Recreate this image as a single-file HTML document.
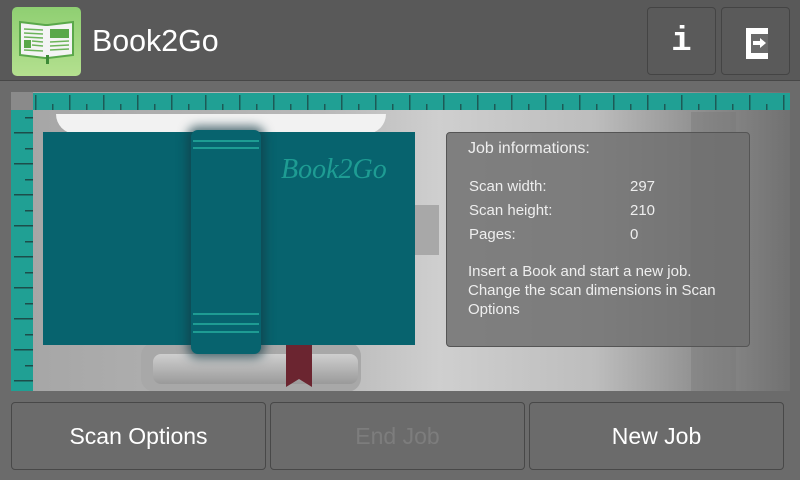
<!DOCTYPE html>
<html><head><style>
*{margin:0;padding:0;box-sizing:border-box}
body{width:800px;height:480px;background:#6b6b6b;font-family:"Liberation Sans",sans-serif;position:relative;overflow:hidden}
.hdr{position:absolute;left:0;top:0;width:800px;height:81px;background:#595959;border-bottom:1px solid #474747}
.logo{position:absolute;left:12px;top:7px;width:69px;height:69px;border-radius:5px;background:linear-gradient(#8fcf72,#b4e08f);}
.title{position:absolute;left:92px;top:23px;font-size:31px;color:#fff;transform:scaleX(.98);transform-origin:left}
.hb{position:absolute;top:7px;width:69px;height:68px;border:1px solid #444;border-radius:4px;background:#5a5a5a;color:#fff;text-align:center}
.scan{position:absolute;left:11px;top:92px;width:779px;height:299px;background:linear-gradient(90deg,#a5a5a5 0%,#b8b8b8 40%,#cfcfcf 55%,#bdbdbd 75%,#8a8a8a 90%,#717171 100%);overflow:hidden}
.btn{position:absolute;top:402px;width:255px;height:68px;border:1px solid #484848;border-radius:4px;background:#6b6b6b;color:#fff;font-size:23px;text-align:center;line-height:66px}
.info{position:absolute;left:446px;top:132px;width:304px;height:215px;border:1px solid #555;border-radius:4px;background:rgba(110,110,110,.82);color:#eee;font-size:15px}
</style></head><body>
<div class="hdr">
 <div class="logo">
  <svg width="69" height="69" viewBox="0 0 69 69">
   <path d="M8 15 L33 18 L36 18 L61 15 L61 48 L36 51 L33 51 L8 48Z" fill="#f4f4f4" stroke="#5aa84a" stroke-width="2"/>
   <g stroke="#6cb45a" stroke-width="1.5">
    <line x1="12" y1="22" x2="31" y2="23"/><line x1="12" y1="26" x2="31" y2="27"/><line x1="12" y1="30" x2="31" y2="31"/><line x1="20" y1="34" x2="31" y2="35"/><line x1="20" y1="38" x2="31" y2="39"/><line x1="12" y1="43" x2="31" y2="44"/>
    <line x1="38" y1="35" x2="57" y2="34"/><line x1="38" y1="39" x2="57" y2="38"/><line x1="38" y1="43" x2="57" y2="42"/>
   </g>
   <rect x="12" y="33" width="7" height="8" fill="#5aa84a"/><rect x="38" y="22" width="19" height="9" fill="#5aa84a"/>
   <rect x="34" y="48" width="3" height="9" fill="#3c8a36"/>
  </svg>
 </div>
 <div class="title">Book2Go</div>
 <div class="hb" style="left:647px;font-size:34px;font-weight:bold;line-height:68px;font-family:'Liberation Mono',monospace">i</div>
 <div class="hb" style="left:721px"><svg width="69" height="68"><path d="M24 20h22v6h-17v19h17v6h-22z" fill="#fff"/><path d="M29 26h17v19h-17z" fill="#6a6a6a"/><path d="M31 33h7v-3l6 5-6 5v-3h-7z" fill="#fff"/></svg></div>
</div>
<div class="scan">
 <div style="position:absolute;left:130px;top:250px;width:220px;height:50px;border-radius:14px;background:#a8a8a8"></div>
 <div style="position:absolute;left:142px;top:262px;width:205px;height:30px;border-radius:8px;background:linear-gradient(#cfcfcf,#9a9a9a)"></div>
 <div style="position:absolute;left:680px;top:20px;width:45px;height:280px;background:rgba(120,120,120,.4)"></div>
 <div style="position:absolute;left:403px;top:113px;width:25px;height:50px;background:#a8a8a8"></div>
 <div style="position:absolute;left:45px;top:22px;width:330px;height:20px;background:#f2f2f2;border-radius:0 0 20px 20px"></div>
 <div style="position:absolute;left:32px;top:40px;width:372px;height:213px;background:#07636e"></div>
 <div style="position:absolute;left:180px;top:38px;width:70px;height:224px;border-radius:7px;background:#07636e;box-shadow:0 0 10px 4px rgba(20,60,70,.7)">
  <div style="position:absolute;left:2px;top:10px;width:66px;height:2px;background:#1e9c93"></div>
  <div style="position:absolute;left:2px;top:17px;width:66px;height:2px;background:#1e9c93"></div>
  <div style="position:absolute;left:2px;top:183px;width:66px;height:2px;background:#1e9c93"></div>
  <div style="position:absolute;left:2px;top:193px;width:66px;height:2px;background:#1e9c93"></div>
  <div style="position:absolute;left:2px;top:201px;width:66px;height:2px;background:#1e9c93"></div>
 </div>
 <div style="position:absolute;left:270px;top:62px;color:#1e9c93;font-size:28px;font-style:italic;font-family:'Liberation Serif',serif">Book2Go</div>
 <svg style="position:absolute;left:275px;top:253px" width="26" height="42"><path d="M0 0h26v42l-13-8-13 8z" fill="#6b2530"/></svg>
 <div style="position:absolute;left:0;top:0;width:22px;height:18px;background:#8a8a8a"></div>
 <svg style="position:absolute;left:0;top:0" width="779" height="299">
  <defs>
   <pattern id="pt" x="22" y="0" width="34" height="18" patternUnits="userSpaceOnUse">
    <rect width="34" height="18" fill="#20a094"/>
    <rect x="2" y="3" width="1.5" height="15" fill="#1d5a56"/>
    <rect x="19" y="12" width="1.5" height="6" fill="#1d5a56"/>
   </pattern>
   <pattern id="pl" x="0" y="18" width="22" height="31" patternUnits="userSpaceOnUse">
    <rect width="22" height="31" fill="#20a094"/>
    <rect x="14" y="7" width="8" height="1.5" fill="#1d4d4a"/>
    <rect x="3" y="22" width="19" height="1.5" fill="#1d4d4a"/>
   </pattern>
  </defs>
  <rect x="22" y="1" width="757" height="17" fill="url(#pt)"/>
  <rect x="0" y="18" width="22" height="281" fill="url(#pl)"/>
 </svg>
</div>
<div class="info">
 <div style="position:absolute;left:21px;top:7px;font-size:16px">Job informations:</div>
 <div style="position:absolute;left:22px;top:42px;line-height:24px">Scan width:<br>Scan height:<br>Pages:</div>
 <div style="position:absolute;left:183px;top:42px;line-height:24px">297<br>210<br>0</div>
 <div style="position:absolute;left:21px;top:129px;line-height:19px;width:280px">Insert a Book and start a new job. Change the scan dimensions in Scan Options</div>
</div>
<div class="btn" style="left:11px">Scan Options</div>
<div class="btn" style="left:270px;color:#7d7d7d">End Job</div>
<div class="btn" style="left:529px">New Job</div>
</body></html>
